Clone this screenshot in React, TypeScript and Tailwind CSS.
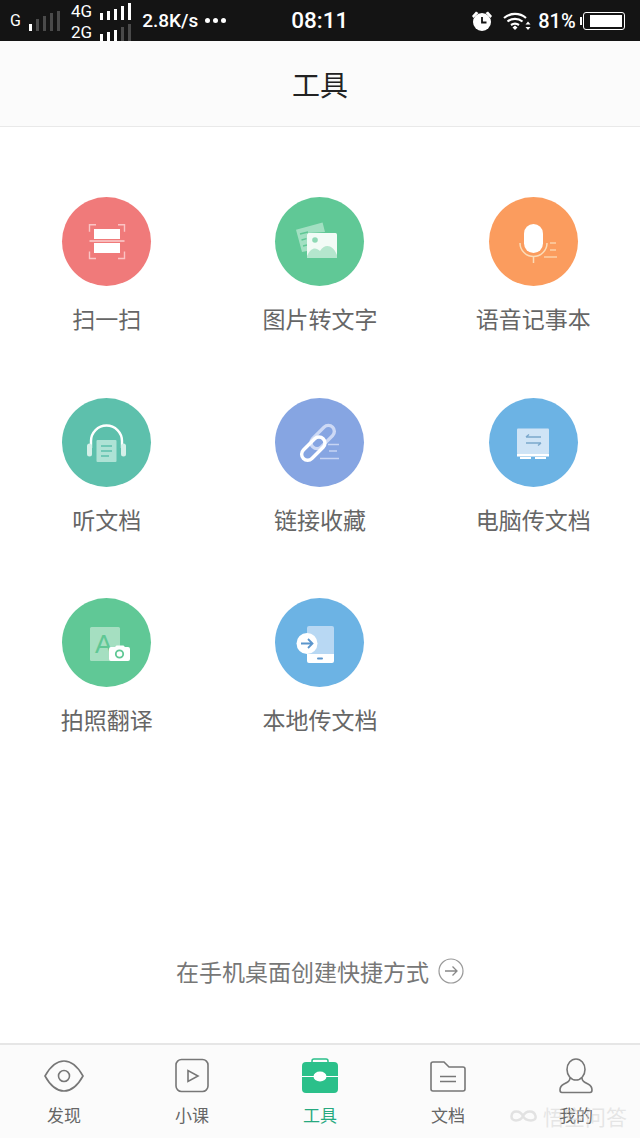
import type { ReactNode } from 'react';

const cjk = { fontFamily: '"Noto Sans CJK SC", "Noto Sans", sans-serif' };

function Bars({ on, heights }: { on: number; heights: number[] }) {
  return (
    <div className="flex items-end gap-[4px]">
      {heights.map((h, i) => (
        <div
          key={i}
          className={i < on ? 'w-[3px] bg-white' : 'w-[3px] bg-[#4a4a4a]'}
          style={{ height: h }}
        />
      ))}
    </div>
  );
}

function StatusBar() {
  return (
    <div className="flex h-[41px] shrink-0 items-center overflow-hidden bg-[#141414] text-white" style={{ fontFamily: 'Roboto, sans-serif' }}>
      <span className="ml-[10px] w-[12px] text-[16px] leading-none">G</span>
      <div className="ml-[7px]">
        <Bars on={1} heights={[7, 12, 15, 18, 20]} />
      </div>
      <div className="ml-[11px] flex h-[41px] flex-col justify-between pt-[3px]">
        <div className="flex items-end gap-[8px]">
          <span className="text-[17px] leading-[17px]">4G</span>
          <Bars on={5} heights={[7, 9, 11, 14, 17]} />
        </div>
        <div className="flex items-end gap-[8px]">
          <span className="text-[17px] leading-[17px]">2G</span>
          <Bars on={3} heights={[7, 9, 11, 14, 17]} />
        </div>
      </div>
      <span className="ml-[11px] w-[63px] text-[19px] font-medium leading-none">2.8K/s</span>
      <div className="flex gap-[3px]">
        <div className="size-[5px] rounded-full bg-white" />
        <div className="size-[5px] rounded-full bg-white" />
        <div className="size-[5px] rounded-full bg-white" />
      </div>
      <span className="ml-[65px] w-[60px] text-[22.500px] font-medium leading-none">08:11</span>
      <svg className="ml-[120px]" width="22" height="22" viewBox="0 0 22 22">
        <circle cx="11" cy="12" r="9" fill="#fff" />
        <path d="M1 6 L5 1.500 L7.500 3 L2.500 8Z M21 6 L17 1.500 L14.500 3 L19.500 8Z" fill="#fff" />
        <path d="M11 7v5.500h4.500" stroke="#141414" strokeWidth="1.800" fill="none" />
      </svg>
      <svg className="ml-[10px]" width="28" height="21" viewBox="0 0 28 21">
        <path d="M1 8a17 17 0 0 1 22 0M4.500 11.500a12 12 0 0 1 15 0M8 15a7 7 0 0 1 8 0" stroke="#fff" strokeWidth="2.200" fill="none" />
        <path d="M9.500 17.500 L12 15.500 L14.500 17.500 L12 20Z" fill="#fff" />
        <path d="M25 11.500l2.500 3h-5zM25 20l2.500-3h-5z" fill="#fff" />
      </svg>
      <span className="ml-[7px] w-[37px] text-[20px] font-medium leading-none">81%</span>
      <div className="ml-[5px] h-[8px] w-[2px] bg-white" />
      <div className="ml-[1px] flex h-[18px] w-[42px] items-stretch justify-end rounded-[3px] border border-white p-[2px]">
        <div className="w-[32px] bg-white" />
      </div>
    </div>
  );
}

function ScanIcon() {
  return (
    <>
      <rect x="32" y="32" width="26" height="10" fill="#fff" />
      <rect x="32" y="46" width="26" height="10" fill="#fff" />
      <path d="M27.500 44h35" stroke="#fbd0d0" strokeWidth="1.300" />
      <path d="M34 27.800h-6.500v7M56 27.800h6.500v7M34 61.500h-6.500v-7M56 61.500h6.500v-7" stroke="#fbc4c4" strokeWidth="1.400" fill="none" />
    </>
  );
}

function PictureIcon() {
  return (
    <>
      <path d="M21 32.700 L47.600 25.400 L50 35 L32 36 L32 54 L27 55Z" fill="#a2e0c2" />
      <path d="M25 37l8-2M26.500 43l5-1.400M28 49l4-1" stroke="#5fc794" strokeWidth="1.300" />
      <rect x="32" y="36" width="30" height="25" rx="1.500" fill="#f2fbf6" />
      <circle cx="40" cy="43" r="2.800" fill="#8fd9b5" />
      <path d="M32 59 C36 50 41 50 45 54 C50 46 58 48 62 58 V61 H32Z" fill="#b4e6cd" />
    </>
  );
}

function MicIcon() {
  return (
    <>
      <rect x="35" y="27" width="19" height="29" rx="9.500" fill="#fff" />
      <path d="M31 46a13.500 13.500 0 0 0 27 0M44.500 60v6" stroke="#fbdcb8" strokeWidth="1.500" fill="none" />
      <path d="M61 46h6M61 53h6M55 60h13" stroke="#fbd0a8" strokeWidth="1.300" />
    </>
  );
}

function HeadphonesIcon() {
  return (
    <>
      <path d="M29 50v-7a15.500 15.500 0 0 1 31 0v7" stroke="#fff" strokeWidth="2.400" fill="none" />
      <rect x="25" y="45.500" width="5" height="13" rx="2.500" fill="#d5f0e9" />
      <rect x="59" y="45.500" width="5" height="13" rx="2.500" fill="#d5f0e9" />
      <rect x="34.500" y="42" width="20" height="22" rx="1" fill="#aee2d5" />
      <path d="M39 48h11M39 53h11M39 58h8" stroke="#5cc0ac" strokeWidth="1.700" />
    </>
  );
}

function LinkIcon() {
  return (
    <>
      <rect x="41.700" y="25" width="12" height="28" rx="6" transform="rotate(45 47.700 39)" fill="none" stroke="#cdd9f5" strokeWidth="3.400" />
      <rect x="32.300" y="36.600" width="12" height="28" rx="6" transform="rotate(45 38.300 50.600)" fill="none" stroke="#fff" strokeWidth="3.400" />
      <path d="M53 46.500h11M54 53h8M45 60.500h19" stroke="#c6d4f3" strokeWidth="1.400" />
    </>
  );
}

function MonitorIcon() {
  return (
    <>
      <rect x="28" y="30.500" width="32" height="25" rx="1" fill="#cfe4f6" />
      <rect x="28" y="55.500" width="32" height="3" fill="#fff" />
      <path d="M31 60h11M46 60h11" stroke="#fff" strokeWidth="2" />
      <path d="M37 39h15M37 39l3-2.500M52 45H37M52 45l-3 2.500" stroke="#7ba8cc" strokeWidth="1.500" fill="none" />
    </>
  );
}

function TranslateIcon() {
  return (
    <>
      <rect x="28" y="29" width="30" height="34" rx="1.500" fill="#a5dfc1" />
      <text x="33" y="55" fontSize="26" fill="#5fc794" style={{ fontFamily: '"Liberation Sans", sans-serif' }}>A</text>
      <path d="M47 51a2 2 0 0 1 2-2h4l1.500-1.500h7L63 49h3a2 2 0 0 1 2 2v10a2 2 0 0 1-2 2H49a2 2 0 0 1-2-2Z" fill="#fff" />
      <circle cx="57.500" cy="56" r="3.700" fill="none" stroke="#5fc794" strokeWidth="1.800" />
    </>
  );
}

function PhoneIcon() {
  return (
    <>
      <path d="M32 30a2 2 0 0 1 2-2h23a2 2 0 0 1 2 2v26H32Z" fill="#b8d8f3" />
      <path d="M32 56h27v7a2 2 0 0 1-2 2H34a2 2 0 0 1-2-2Z" fill="#fff" />
      <rect x="42" y="59.500" width="6" height="2" rx="1" fill="#5b95cc" />
      <circle cx="32" cy="45.500" r="10.500" fill="#fff" />
      <path d="M26 45.500h11.500M33 41l4.500 4.500L33 50" stroke="#5b95cc" strokeWidth="1.800" fill="none" />
    </>
  );
}

const tools: { label: string; color: string; icon: ReactNode }[] = [
  { label: '扫一扫', color: 'bg-[#f07a7a]', icon: <ScanIcon /> },
  { label: '图片转文字', color: 'bg-[#60c896]', icon: <PictureIcon /> },
  { label: '语音记事本', color: 'bg-[#fb9c5e]', icon: <MicIcon /> },
  { label: '听文档', color: 'bg-[#5dc0ac]', icon: <HeadphonesIcon /> },
  { label: '链接收藏', color: 'bg-[#86a5e2]', icon: <LinkIcon /> },
  { label: '电脑传文档', color: 'bg-[#6cb3e4]', icon: <MonitorIcon /> },
  { label: '拍照翻译', color: 'bg-[#60c896]', icon: <TranslateIcon /> },
  { label: '本地传文档', color: 'bg-[#6cb3e4]', icon: <PhoneIcon /> },
];

function ToolCell({ label, color, icon }: { label: string; color: string; icon: ReactNode }) {
  return (
    <div className="flex h-[200.500px] flex-col items-center">
      <div className={`size-[89px] rounded-full ${color}`}>
        <svg width="89" height="89" viewBox="0 0 89 89">{icon}</svg>
      </div>
      <span className="mt-[15px] text-[23px] leading-[34px] text-[#666]">{label}</span>
    </div>
  );
}

const tabStroke = { stroke: '#777', strokeWidth: 1.600, fill: 'none' };

const tabs: { label: string; active?: boolean; icon: ReactNode }[] = [
  {
    label: '发现',
    icon: (
      <>
        <path d="M1 18C6 9 13 3 20 3s14 6 19 15c-5 9-12 15-19 15S6 27 1 18Z" {...tabStroke} />
        <circle cx="20" cy="18" r="5.500" {...tabStroke} />
      </>
    ),
  },
  {
    label: '小课',
    icon: (
      <>
        <rect x="4" y="1.500" width="32" height="32" rx="5.500" {...tabStroke} />
        <path d="M16 12.500v11l10-5.500Z" {...tabStroke} />
      </>
    ),
  },
  {
    label: '工具',
    active: true,
    icon: (
      <>
        <path d="M12 5V3a2 2 0 0 1 2-2h12a2 2 0 0 1 2 2v2" stroke="#2bc08a" strokeWidth="1.500" fill="none" />
        <rect x="2" y="4" width="36" height="31" rx="4" fill="#2bc08a" />
        <path d="M2 18.500h36" stroke="#fff" strokeWidth="1.200" />
        <ellipse cx="20" cy="18.500" rx="6.500" ry="5" fill="#fff" />
      </>
    ),
  },
  {
    label: '文档',
    icon: (
      <>
        <path d="M3 6a2 2 0 0 1 2-2h11l5 5h14a2 2 0 0 1 2 2v20a2 2 0 0 1-2 2H5a2 2 0 0 1-2-2Z" {...tabStroke} />
        <path d="M12 18.500h16M12 23.500h16" {...tabStroke} />
      </>
    ),
  },
  {
    label: '我的',
    icon: (
      <>
        <ellipse cx="20" cy="11.500" rx="9" ry="10.500" {...tabStroke} />
        <path d="M14 20c0 3-2 4-6 6-4 2-4 4-4 6 0 1.500.5 2.500 2 2.500h28c1.500 0 2-1 2-2.500 0-2 0-4-4-6-4-2-6-3-6-6" {...tabStroke} />
      </>
    ),
  },
];

function TabBar() {
  return (
    <div className="relative grid h-[95px] shrink-0 grid-cols-5 border-t-2 border-[#e6e6e6] bg-[#fbfbfb]">
      {tabs.map((t) => (
        <div key={t.label} className="flex flex-col items-center pt-[13px]">
          <svg width="40" height="36" viewBox="0 0 40 36">{t.icon}</svg>
          <span className={`mt-[9px] text-[17px] leading-[24px] ${t.active ? 'text-[#27a97f]' : 'text-[#666]'}`}>{t.label}</span>
        </div>
      ))}
      {/* watermark sits over the last tab */}
      <div className="pointer-events-none absolute left-[510px] top-[57px] flex items-center gap-[6px]">
        <svg width="27" height="16" viewBox="0 0 27 16">
          <path d="M13 8C10 2 2 2 1.500 8S10 14 13 8s11-6 12.500 0S16 14 13 8Z" stroke="#e2e2e2" strokeWidth="2.500" fill="none" />
        </svg>
        <span className="text-[21px] leading-[28px] text-[#d0d0d0]/50">悟空问答</span>
      </div>
    </div>
  );
}

export default function App() {
  return (
    <div className="flex h-[1138px] w-[640px] flex-col overflow-hidden bg-white" style={cjk}>
      <StatusBar />
      <div className="flex h-[86px] shrink-0 items-center justify-center border-b border-[#e9e9e9] bg-[#fbfbfb]">
        <span className="text-[28px] leading-none text-[#222]">工具</span>
      </div>
      <div className="grid flex-1 grid-cols-3 content-start pt-[70px]">
        {tools.map((t) => (
          <ToolCell key={t.label} {...t} />
        ))}
      </div>
      <div className="flex h-[90px] shrink-0 items-start justify-center gap-[9px]">
        <span className="text-[23px] leading-[36px] text-[#777]">在手机桌面创建快捷方式</span>
        <svg className="mt-[5px]" width="26" height="26" viewBox="0 0 26 26">
          <circle cx="13" cy="13" r="12" fill="none" stroke="#999" strokeWidth="1.200" />
          <path d="M7 13h12M14.500 8.500L19 13l-4.500 4.500" fill="none" stroke="#888" strokeWidth="1.300" />
        </svg>
      </div>
      <TabBar />
    </div>
  );
}
